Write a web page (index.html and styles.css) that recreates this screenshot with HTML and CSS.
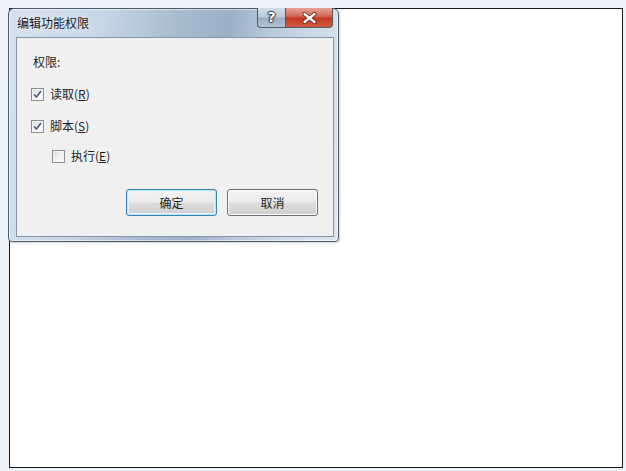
FILE: index.html
```html
<!DOCTYPE html>
<html lang="zh">
<head>
<meta charset="utf-8">
<title>编辑功能权限</title>
<link rel="stylesheet" href="styles.css">
</head>
<body>
<div class="page"></div>
<div class="dialog">
  <div class="titlebar">
    <span class="title">编辑功能权限</span>
    <div class="caption-buttons">
      <div class="cap help">?</div>
      <div class="cap close">
        <svg width="15" height="12" viewBox="0 0 15 12"><path d="M2.5 2 L12.5 10 M12.5 2 L2.5 10" stroke="#5a1e14" stroke-width="4" stroke-linecap="round"/><path d="M2.5 2 L12.5 10 M12.5 2 L2.5 10" stroke="#ffffff" stroke-width="2.4" stroke-linecap="round"/></svg>
      </div>
    </div>
  </div>
  <div class="client">
    <div class="label">权限:</div>
    <label class="row r1"><span class="cb checked"><svg width="9" height="9" viewBox="0 0 9 9"><path d="M1 4.5 L3.5 7 L8 1" fill="none" stroke="#4a5a8c" stroke-width="1.6"/></svg></span>读取(<u>R</u>)</label>
    <label class="row r2"><span class="cb checked"><svg width="9" height="9" viewBox="0 0 9 9"><path d="M1 4.5 L3.5 7 L8 1" fill="none" stroke="#4a5a8c" stroke-width="1.6"/></svg></span>脚本(<u>S</u>)</label>
    <label class="row r3 indent"><span class="cb"></span>执行(<u>E</u>)</label>
    <div class="buttons">
      <button class="btn default">确定</button>
      <button class="btn">取消</button>
    </div>
  </div>
</div>
</body>
</html>
```
FILE: styles.css
```css
html, body {
  margin: 0;
  padding: 0;
}
body {
  width: 626px;
  height: 471px;
  background: #eef3fa;
  font-family: "Noto Sans CJK SC", "Microsoft YaHei", sans-serif;
  font-size: 12px;
  color: #1e1e1e;
  position: relative;
  overflow: hidden;
}
.page {
  position: absolute;
  left: 9px;
  top: 8px;
  width: 612px;
  height: 458px;
  border: 1px solid #1a1a1a;
  background: #ffffff;
}
.dialog {
  position: absolute;
  left: 8px;
  top: 8px;
  width: 318px;
  height: 228px;
  border: 1px solid #4d5a68;
  border-radius: 6px 6px 4px 4px;
  background: linear-gradient(100deg, #d6e2ef 0%, #c8d7e8 25%, #a9bdd1 45%, #9ab0c6 60%, #b9cadb 72%, #cfdbe8 85%, #dbe5f0 100%);
  box-shadow: inset 0 0 0 1px rgba(255,255,255,0.55), 1px 1px 2px rgba(60,80,100,0.25);
  display: flex;
  flex-direction: column;
  padding: 0 4px 4px 7px;
}
.titlebar {
  height: 28px;
  display: flex;
  align-items: flex-start;
  justify-content: space-between;
}
.title {
  margin-top: 5px;
  margin-left: 1px;
  font-size: 12px;
  color: #1b1b1b;
  text-shadow: 0 0 6px rgba(255,255,255,0.9);
}
.caption-buttons {
  display: flex;
  margin-right: 1px;
  margin-top: -1px;
}
.cap {
  height: 20px;
  box-sizing: border-box;
  border: 1px solid #4f5b6b;
  border-top: none;
  display: flex;
  align-items: center;
  justify-content: center;
}
.help {
  width: 28px;
  border-radius: 0 0 0 4px;
  border-right: none;
  background: linear-gradient(#d3dde8 0%, #bccad9 45%, #9aaec3 55%, #b1c2d4 100%);
  color: #ffffff;
  font-family: "DejaVu Sans", sans-serif;
  font-weight: bold;
  font-size: 14px;
  line-height: 1;
  padding-bottom: 1px;
  text-shadow: 0 0 1px #2d3a4a, 1px 0 1px #2d3a4a, -1px 0 1px #2d3a4a, 0 1px 1px #2d3a4a, 0 -1px 1px #2d3a4a;
}
.close {
  width: 48px;
  border-radius: 0 0 4px 0;
  background: linear-gradient(#e8a196 0%, #d46e5e 40%, #c23a23 55%, #d25b3d 100%);
}
.client {
  flex: 1;
  background: #f0f0f0;
  border: 1px solid #8795a6;
  display: flex;
  flex-direction: column;
  padding: 0 15px 0 16px;
}
.label {
  margin-top: 16px;
  height: 16px;
  line-height: 16px;
}
.row {
  display: flex;
  align-items: center;
  height: 16px;
  line-height: 16px;
}
.r1 { margin-top: 16px; margin-left: -2px; }
.r2 { margin-top: 16px; margin-left: -2px; }
.r3 { margin-top: 14px; margin-left: 19px; }
.row u {
  text-decoration: underline;
  text-underline-offset: 1px;
}
.cb {
  width: 13px;
  height: 13px;
  box-sizing: border-box;
  border: 1px solid #8f8f8f;
  background: linear-gradient(135deg, #dcdcdc 0%, #f4f4f4 60%, #ffffff 100%);
  box-shadow: inset 0 0 0 1px #f4f4f4;
  margin-right: 6px;
  display: flex;
  align-items: center;
  justify-content: center;
}
.buttons {
  margin-top: 25px;
  display: flex;
  justify-content: flex-end;
  gap: 10px;
}
.btn {
  width: 91px;
  height: 27px;
  border: 1px solid #707070;
  border-radius: 3px;
  background: linear-gradient(#f3f3f3 0%, #ebebeb 49%, #dddddd 51%, #cfcfcf 100%);
  box-shadow: inset 0 0 0 1px #fbfbfb;
  font-family: "Noto Sans CJK SC", sans-serif;
  font-size: 12px;
  color: #1e1e1e;
  padding: 0;
}
.btn.default {
  border-color: #3c7fb1;
  box-shadow: inset 0 0 0 1px #b8e6f9, inset 0 0 0 2px #e5f4fb;
}
```
